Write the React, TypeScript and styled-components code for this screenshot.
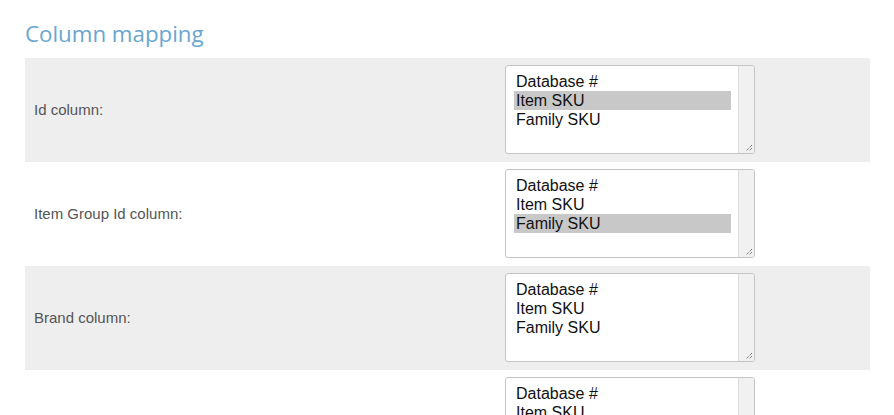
import React from "react";
import styled, { createGlobalStyle } from "styled-components";

const Global = createGlobalStyle`
  html, body { margin: 0; padding: 0; background: #fff; }
  body { font-family: "Liberation Sans", Arial, sans-serif; }
`;

const Page = styled.div`
  padding: 0 24px 0 25px;
  width: 845px;
`;

const Heading = styled.h2`
  margin: 0;
  padding: 18px 0 8px 0;
  font-family: "Open Sans", "Noto Sans", sans-serif;
  font-weight: 400;
  font-size: 22.3px;
  line-height: 32px;
  color: #6aa6d0;
`;

const Row = styled.div<{ $shaded: boolean }>`
  display: grid;
  grid-template-columns: 480px 1fr;
  align-items: center;
  padding: 7px 0 8px 0;
  background: ${(p) => (p.$shaded ? "#eeeeee" : "#ffffff")};
`;

const Label = styled.label`
  padding-left: 9px;
  font-size: 15px;
  color: #555555;
`;

const ListBox = styled.div`
  position: relative;
  box-sizing: border-box;
  width: 250px;
  height: 89px;
  border: 1px solid #c4c4c4;
  border-radius: 3px;
  background: #fff;
  padding: 6px 23px 0 8px;
  overflow: hidden;
`;

const Option = styled.div<{ $selected: boolean }>`
  height: 19px;
  line-height: 19px;
  padding-left: 2px;
  font-size: 16px;
  color: #111;
  background: ${(p) => (p.$selected ? "#c8c8c8" : "transparent")};
  white-space: nowrap;
`;

const Track = styled.div`
  position: absolute;
  top: 0;
  right: 0;
  bottom: 0;
  width: 15px;
  background: #f1f1f1;
  border-left: 1px solid #dcdcdc;
`;

const Grip = styled.svg`
  position: absolute;
  right: 1px;
  bottom: 1px;
`;

const options = ["Database #", "Item SKU", "Family SKU"];

const rows: { label: string; selected: number }[] = [
  { label: "Id column:", selected: 1 },
  { label: "Item Group Id column:", selected: 2 },
  { label: "Brand column:", selected: -1 },
  { label: "", selected: -1 },
];

export default function App() {
  return (
    <>
      <Global />
      <Page>
        <Heading>Column mapping</Heading>
        {rows.map((r, i) => (
          <Row key={i} $shaded={i % 2 === 0}>
            <Label>{r.label}</Label>
            <ListBox role="listbox">
              {options.map((o, j) => (
                <Option key={o} role="option" $selected={j === r.selected}>
                  {o}
                </Option>
              ))}
              <Track />
              <Grip width="9" height="9" viewBox="0 0 9 9">
                <path d="M8 2 L2 8 M8 5 L5 8" stroke="#555" strokeWidth="1" strokeDasharray="1 1" fill="none" />
              </Grip>
            </ListBox>
          </Row>
        ))}
      </Page>
    </>
  );
}
